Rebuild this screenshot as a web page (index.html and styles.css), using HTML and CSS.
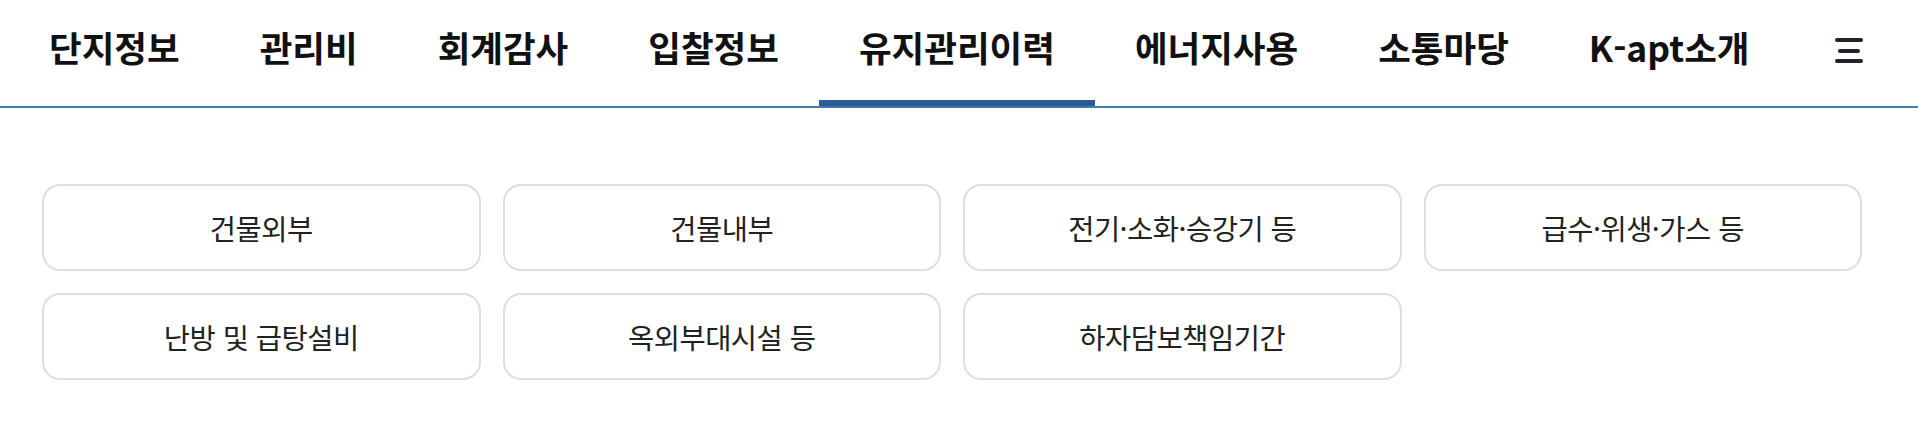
FILE: index.html
```html
<!DOCTYPE html>
<html lang="ko">
<head>
    <meta charset="UTF-8">
    <meta name="viewport" content="width=device-width, initial-scale=1.0">
    <title>유지관리이력</title>
    <link rel="stylesheet" href="styles.css">
</head>
<body>
    <!-- 상단 메뉴 -->
    <nav class="gnb">
        <ul class="gnb-list">
            <li class="gnb-item"><a href="#">단지정보</a></li>
            <li class="gnb-item"><a href="#">관리비</a></li>
            <li class="gnb-item"><a href="#">회계감사</a></li>
            <li class="gnb-item"><a href="#">입찰정보</a></li>
            <li class="gnb-item active"><a href="#">유지관리이력</a></li>
            <li class="gnb-item"><a href="#">에너지사용</a></li>
            <li class="gnb-item"><a href="#">소통마당</a></li>
            <li class="gnb-item"><a href="#">K-apt소개</a></li>
        </ul>
        <button class="menu-button" aria-label="전체메뉴">
            <span></span><span class="short"></span><span></span>
        </button>
    </nav>

    <!-- 하위 메뉴 -->
    <div class="sub-menu">
        <a class="sub-item" href="#">건물외부</a>
        <a class="sub-item" href="#">건물내부</a>
        <a class="sub-item" href="#">전기·소화·승강기 등</a>
        <a class="sub-item" href="#">급수·위생·가스 등</a>
        <a class="sub-item" href="#">난방 및 급탕설비</a>
        <a class="sub-item" href="#">옥외부대시설 등</a>
        <a class="sub-item" href="#">하자담보책임기간</a>
    </div>
</body>
</html>
```

FILE: styles.css
```css
/* 기본 */
body {
    margin: 0;
    background-color: #fff;
    font-family: "Noto Sans CJK KR", "Noto Sans", sans-serif;
    color: #111;
}

a {
    text-decoration: none;
    color: inherit;
}

/* 상단 메뉴 */
.gnb {
    display: flex;
    align-items: stretch;
    height: 106px;
    padding: 0 55px 0 9px;
    border-bottom: 2px solid #3a7ea9;
}

.gnb-list {
    display: flex;
    margin: 0;
    padding: 0;
    list-style: none;
}

.gnb-item {
    box-sizing: border-box;
    height: 106px;
    padding: 29px 40px 0;
    border-bottom: 6px solid transparent;
    font-size: 35.5px;
    font-weight: 700;
    line-height: 36px;
    letter-spacing: 0;
}

.gnb-item.active {
    border-bottom-color: #2b5b99;
}

.menu-button {
    display: flex;
    flex-direction: column;
    align-items: center;
    gap: 6.5px;
    margin-left: auto;
    margin-top: 38px;
    align-self: flex-start;
    width: 28px;
    padding: 0;
    background: none;
    border: none;
    cursor: pointer;
}

.menu-button span {
    display: block;
    width: 28px;
    height: 4px;
    border-radius: 2px;
    background-color: #22232e;
}

.menu-button span.short {
    width: 22px;
}

/* 하위 메뉴 */
.sub-menu {
    display: grid;
    grid-template-columns: repeat(4, 1fr);
    gap: 22px;
    width: 1820px;
    margin: 76px 0 0 42px;
}

.sub-item {
    display: flex;
    align-items: center;
    justify-content: center;
    box-sizing: border-box;
    height: 87px;
    border: 2px solid #dedede;
    border-radius: 18px;
    font-size: 28.5px;
    letter-spacing: -0.5px;
    color: #222;
}
```
